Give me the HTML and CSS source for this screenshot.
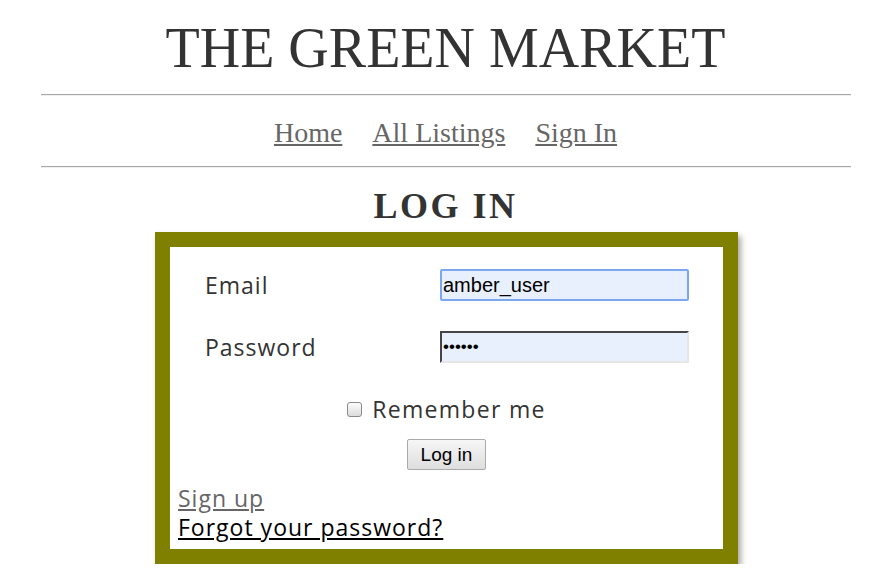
FILE: index.html
```html
<!DOCTYPE html>
<html>
<head>
<meta charset="utf-8">
<link rel="stylesheet" href="styles.css">
</head>
<body>
<div class="page">
  <h1 class="title">THE GREEN MARKET</h1>
  <hr class="rule">
  <nav class="nav">
    <a href="#">Home</a>
    <a href="#">All Listings</a>
    <a href="#">Sign In</a>
  </nav>
  <hr class="rule">
  <h2 class="heading">LOG IN</h2>
  <div class="box-wrap">
    <div class="box">
      <form class="form">
        <div class="row">
          <label class="label">Email</label>
          <input class="field focused" type="text" value="amber_user">
        </div>
        <div class="row">
          <label class="label">Password</label>
          <input class="field pwd" type="password" value="secret">
        </div>
        <div class="remember">
          <span class="check"></span>
          <span>Remember me</span>
        </div>
        <div class="actions">
          <button class="btn" type="button">Log in</button>
        </div>
      </form>
      <div class="links">
        <a class="signup" href="#">Sign up</a>
        <a class="forgot" href="#">Forgot your password?</a>
      </div>
    </div>
  </div>
</div>
</body>
</html>
```

FILE: styles.css
```css
html, body {
  margin: 0;
  padding: 0;
  background: #fff;
}
.page {
  width: 810px;
  margin: 0 auto;
  padding-left: 1px;
  color: #333;
}
.title {
  margin: 0;
  padding-top: 15px;
  font-family: "Liberation Serif", "DejaVu Serif", serif;
  font-weight: normal;
  font-size: 56px;
  line-height: 66px;
  text-align: center;
  color: #333;
}
.rule {
  margin: 13px 0 0 0;
  border: 0;
  border-top: 1px solid #a8a8a8;
  border-bottom: 1px solid #f0f0f0;
  height: 0;
}
.nav {
  display: flex;
  justify-content: center;
  gap: 30px;
  padding: 21px 0 17px 0;
}
.nav a {
  font-family: "Liberation Serif", serif;
  font-size: 28px;
  line-height: 32px;
  color: #666;
  text-decoration: underline;
}
.nav + .rule { margin-top: 0; }
.heading {
  margin: 0;
  padding-top: 18px;
  font-family: "Liberation Serif", serif;
  font-weight: bold;
  font-size: 36px;
  line-height: 40px;
  letter-spacing: 2.5px;
  text-align: center;
  color: #333;
}
.box-wrap {
  display: flex;
  justify-content: center;
  padding-left: 2px;
  margin-top: 6px;
}
.box {
  width: 537px;
  border: 15px solid #808000;
  background: #fff;
  box-shadow: 3px 4px 6px rgba(0,0,0,0.35);
  padding: 22px 8px 7px 8px;
  font-family: "Open Sans", "DejaVu Sans", sans-serif;
}
.row {
  display: grid;
  grid-template-columns: 235px 249px;
  align-items: center;
  padding-left: 27px;
  margin-bottom: 30px;
}
.label {
  font-size: 23px;
  letter-spacing: 1px;
  color: #333;
}
.field {
  box-sizing: border-box;
  width: 249px;
  height: 32px;
  margin: 0;
  background: #e8f0fe;
  font-family: "Liberation Sans", Arial, sans-serif;
  font-size: 20px;
  padding: 0 1px;
  color: #000;
}
.focused {
  border: 2px solid #7aa7ef;
  border-radius: 2px;
  outline: none;
}
.pwd {
  border: 2px inset #a0a0a0;
  border-top-color: #999;
  border-left-color: #999;
  border-right-color: #e6e6e6;
  border-bottom-color: #e6e6e6;
  font-size: 17px;
}
.remember {
  display: flex;
  justify-content: center;
  align-items: center;
  gap: 10px;
  font-size: 23px;
  letter-spacing: 1.3px;
  color: #333;
  margin-top: 0;
  line-height: 32px;
}
.check {
  width: 13px;
  height: 13px;
  border: 1px solid #8a8a8a;
  border-radius: 3px;
  background: linear-gradient(#fcfcfc, #dcdcdc);
}
.actions {
  display: flex;
  justify-content: center;
  margin-top: 14px;
}
.btn {
  font-family: "Liberation Sans", Arial, sans-serif;
  font-size: 19px;
  height: 31px;
  width: 79px;
  padding: 0;
  border: 1px solid #aaa;
  border-radius: 2px;
  background: linear-gradient(#f6f6f6, #dedede);
  color: #000;
}
.links {
  display: flex;
  flex-direction: column;
  align-items: flex-start;
  margin-top: 14px;
  font-size: 23px;
  letter-spacing: 1px;
  line-height: 29px;
}
.signup { color: #666; }
.forgot { color: #000; }
```
